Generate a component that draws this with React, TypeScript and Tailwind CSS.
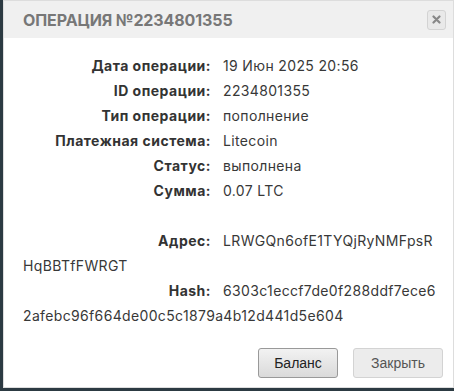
import React from "react";

const rows: Array<{ label: string; value: React.ReactNode }> = [
  { label: "Дата операции:", value: "19 Июн 2025 20:56" },
  { label: "ID операции:", value: "2234801355" },
  { label: "Тип операции:", value: "пополнение" },
  { label: "Платежная система:", value: "Litecoin" },
  { label: "Статус:", value: "выполнена" },
  { label: "Сумма:", value: "0.07 LTC" },
];

function Row({ label, value }: { label: string; value: React.ReactNode }) {
  return (
    <div className="leading-[25px]">
      <span className="inline-block w-[188px] text-right font-bold tracking-[0.5px] mr-[12px] text-[#333]">{label}</span>
      <span className="text-[#383838]">{value}</span>
    </div>
  );
}

export default function App() {
  return (
    <div className="w-[454px] h-[391px] bg-[#2c3a42] pl-[3px] pb-[3px]">
      <div className="h-[388px] bg-white border border-[#ddd] flex flex-col">
        {/* header */}
        <div className="h-[37px] bg-[#f0f0f0] flex items-center justify-between pl-[19px] pr-[7px]">
          <span className="text-[#777] font-bold text-[16px] tracking-[-0.1px] font-['Inter',sans-serif]">
            ОПЕРАЦИЯ №2234801355
          </span>
          <button
            type="button"
            className="w-[19px] h-[20px] rounded-[3px] border border-[#d3d3d3] bg-[#e9e9e9] flex items-center justify-center"
          >
            <svg width="9" height="9" viewBox="0 0 9 9">
              <path d="M1.5 1.5 L7.5 7.5 M7.5 1.5 L1.5 7.5" stroke="#888" strokeWidth="2.2" strokeLinecap="round" />
            </svg>
          </button>
        </div>

        {/* body */}
        <div className="flex-1 pl-[19px] pr-[10px] pt-[15px] text-[14px] tracking-[0.35px] font-['Inter',sans-serif]">
          {rows.map((r) => (
            <Row key={r.label} label={r.label} value={r.value} />
          ))}
          <div className="h-[25px]" />
          <Row
            label="Адрес:"
            value={
              <>
                LRWGQn6ofE1TYQjRyNMFpsR
                <br />
                HqBBTfFWRGT
              </>
            }
          />
          <Row
            label="Hash:"
            value={
              <>
                6303c1eccf7de0f288ddf7ece6
                <br />
                2afebc96f664de00c5c1879a4b12d441d5e604
              </>
            }
          />
        </div>

        {/* footer */}
        <div className="flex justify-end gap-[15px] pr-[10px] pb-[9px] font-['Liberation_Sans',Arial,sans-serif] text-[14px]">
          <button
            type="button"
            className="w-[80px] h-[30px] rounded-[3px] border border-[#999] bg-gradient-to-b from-[#f2f2f2] to-[#dadada] text-[#222]"
          >
            Баланс
          </button>
          <button
            type="button"
            className="w-[90px] h-[30px] rounded-[3px] border border-[#d3d3d3] bg-[#ececec] text-[#555]"
          >
            Закрыть
          </button>
        </div>
      </div>
    </div>
  );
}
